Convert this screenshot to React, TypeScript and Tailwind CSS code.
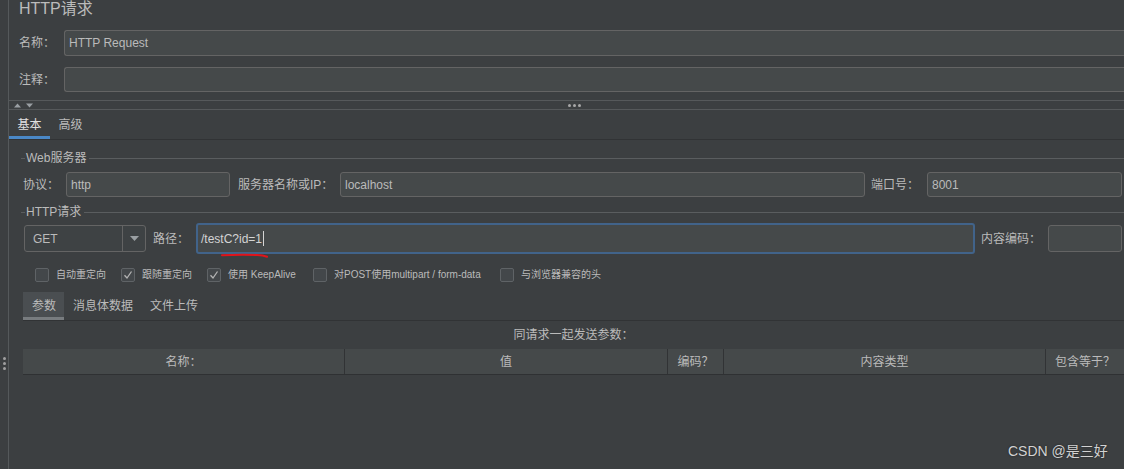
import React from "react";

const Input = ({ value, className = "" }: { value?: string; className?: string }) => (
  <div
    className={`flex items-center rounded-[3px] border border-[#646464] bg-[#45494a] pl-[4px] text-[12px] text-[#bbbbbb] ${className}`}
  >
    {value}
  </div>
);

const GroupTitle = ({ title }: { title: string }) => (
  <div className="flex h-[16px] items-center pl-[12px]">
    <div className="h-px w-[4px] bg-[#5a5d5f]" />
    <span className="px-[1px] text-[12px] leading-[16px] text-[#bbbbbb]">{title}</span>
    <div className="ml-[2px] h-px flex-1 bg-[#5a5d5f]" />
  </div>
);

const Check = ({ checked, label, w }: { checked?: boolean; label: string; w: string }) => (
  <div className={`flex items-center ${w}`}>
    <div className="flex h-[14px] w-[14px] items-center justify-center rounded-[2px] border border-[#5f6366] bg-[#43474a]">
      {checked && (
        <svg width="10" height="10" viewBox="0 0 10 10">
          <path d="M1.5 5.2 L4 8 L8.5 1.5" fill="none" stroke="#b4b4b4" strokeWidth="1.3" />
        </svg>
      )}
    </div>
    <span className="ml-[7px] text-[10px] leading-[14px] text-[#bbbbbb]">{label}</span>
  </div>
);

export default function App() {
  return (
    <div className="relative flex h-[469px] w-[1124px] overflow-hidden bg-[#3c3f41] font-['Liberation_Sans','Noto_Sans_CJK_SC',sans-serif] text-[12px] text-[#bbbbbb]">
      {/* left splitter strip */}
      <div className="flex w-[9px] shrink-0 flex-col items-center border-r border-[#55595b] pt-[357px]">
        <div className="flex flex-col gap-[2px]">
          <div className="h-[3px] w-[3px] rounded-full bg-[#a0a0a0]" />
          <div className="h-[3px] w-[3px] rounded-full bg-[#a0a0a0]" />
          <div className="h-[3px] w-[3px] rounded-full bg-[#a0a0a0]" />
        </div>
      </div>

      <div className="flex min-w-0 flex-1 flex-col">
        {/* title */}
        <div className="pl-[10px] text-[16px] leading-[18px] text-[#bbbbbb]">HTTP请求</div>

        <div className="mt-[12px] flex h-[26px] items-center pl-[10px]">
          <span className="w-[45px]">名称：</span>
          <Input value="HTTP Request" className="h-[26px] flex-1 rounded-r-none border-r-0" />
        </div>
        <div className="mt-[11px] flex h-[25px] items-center pl-[10px]">
          <span className="w-[45px]">注释：</span>
          <Input className="h-[25px] flex-1 rounded-r-none border-r-0" />
        </div>

        {/* collapse bar */}
        <div className="mt-[8px] flex h-[10px] items-center border-y border-[#56595b] pl-[5px]">
          <svg width="20" height="5" viewBox="0 0 20 5">
            <path d="M0 4.5 L3.5 0.5 L7 4.5 Z" fill="#9a9fa3" />
            <path d="M12 0.5 L19 0.5 L15.5 4.5 Z" fill="#9a9fa3" />
          </svg>
          <div className="ml-[534px] flex gap-[2px]">
            <div className="h-[3px] w-[3px] rounded-full bg-[#a8a8a8]" />
            <div className="h-[3px] w-[3px] rounded-full bg-[#a8a8a8]" />
            <div className="h-[3px] w-[3px] rounded-full bg-[#a8a8a8]" />
          </div>
        </div>

        {/* tabs */}
        <div className="flex h-[30px] border-b border-[#313335]">
          <div className="flex w-[41px] items-center justify-center border-b-[3px] border-[#4a88c7] pt-[3px] text-[#e0e0e0]">基本</div>
          <div className="flex w-[41px] items-center justify-center">高级</div>
        </div>

        <div className="mt-[10px]">
          <GroupTitle title="Web服务器" />
        </div>
        <div className="mt-[6px] flex h-[25px] items-center pl-[14px] pr-[2px]">
          <span className="w-[43px]">协议：</span>
          <Input value="http" className="h-[25px] w-[164px]" />
          <span className="ml-[8px] w-[102px]">服务器名称或IP：</span>
          <Input value="localhost" className="h-[25px] flex-1" />
          <span className="ml-[6px] w-[56px]">端口号：</span>
          <Input value="8001" className="h-[25px] w-[195px]" />
        </div>

        <div className="mt-[7px]">
          <GroupTitle title="HTTP请求" />
        </div>
        <div className="mt-[3px] flex h-[31px] items-center pl-[15px] pr-[2px]">
          <div className="flex h-[27px] w-[122px] items-center rounded-[3px] border border-[#646464] bg-[#3e4244]">
            <span className="flex-1 pl-[8px] text-[12px] text-[#bbbbbb]">GET</span>
            <div className="flex h-full w-[23px] items-center justify-center border-l border-[#646464]">
              <svg width="9" height="5" viewBox="0 0 9 5">
                <path d="M0 0 L9 0 L4.5 5 Z" fill="#9a9fa3" />
              </svg>
            </div>
          </div>
          <span className="ml-[7px] w-[43px]">路径：</span>
          <div className="relative flex h-[31px] flex-1 items-center rounded-[3px] border-2 border-[#41638a] bg-[#45494a] pl-[3px] text-[12px] text-[#d4d4d4]">
            /testC?id=1
            <div className="ml-[1px] h-[15px] w-px bg-[#d4d4d4]" />
            <svg className="absolute left-[23px] top-[28px]" width="48" height="6" viewBox="0 0 48 6">
              <path d="M1 2.2 Q20 1.4 36 2 Q42 2.3 46 3.8" fill="none" stroke="#e0141b" strokeWidth="2" strokeLinecap="round" />
            </svg>
          </div>
          <span className="ml-[6px] w-[67px]">内容编码：</span>
          <Input className="h-[27px] w-[74px]" />
        </div>

        {/* checkboxes */}
        <div className="mt-[14px] flex h-[14px] items-center pl-[26px]">
          <Check label="自动重定向" w="w-[86px]" />
          <Check checked label="跟随重定向" w="w-[86px]" />
          <Check checked label="使用 KeepAlive" w="w-[106px]" />
          <Check label="对POST使用multipart / form-data" w="w-[187px]" />
          <Check label="与浏览器兼容的头" w="w-[160px]" />
        </div>

        {/* parameter tabs */}
        <div className="ml-[14px] mt-[10px] flex h-[29px] border-b border-[#313335]">
          <div className="flex items-center border-b-[3px] border-[#787c7f] bg-[#4a4e51] pl-[9px] pr-[8px] pt-[3px]">参数</div>
          <div className="flex items-center pl-[9px] pr-[8px]">消息体数据</div>
          <div className="flex items-center pl-[9px] pr-[8px]">文件上传</div>
        </div>

        <div className="ml-[14px] flex h-[28px] items-center justify-center">同请求一起发送参数：</div>

        {/* table header */}
        <div className="ml-[14px] flex h-[26px] border-b border-[#2f3133] bg-[#45494a]">
          <div className="flex w-[322px] items-center justify-center border-r border-[#313335]">名称：</div>
          <div className="flex w-[323px] items-center justify-center border-r border-[#313335]">值</div>
          <div className="flex w-[56px] items-center justify-center border-r border-[#313335]">编码？</div>
          <div className="flex w-[322px] items-center justify-center border-r border-[#313335]">内容类型</div>
          <div className="flex flex-1 items-center justify-center">包含等于？</div>
        </div>
      </div>

      <div className="absolute left-[1008px] top-[442px] text-[14px] leading-[18px] text-[#d2d2d2] [text-shadow:0_0_2px_#222]">
        CSDN @是三好
      </div>
    </div>
  );
}
